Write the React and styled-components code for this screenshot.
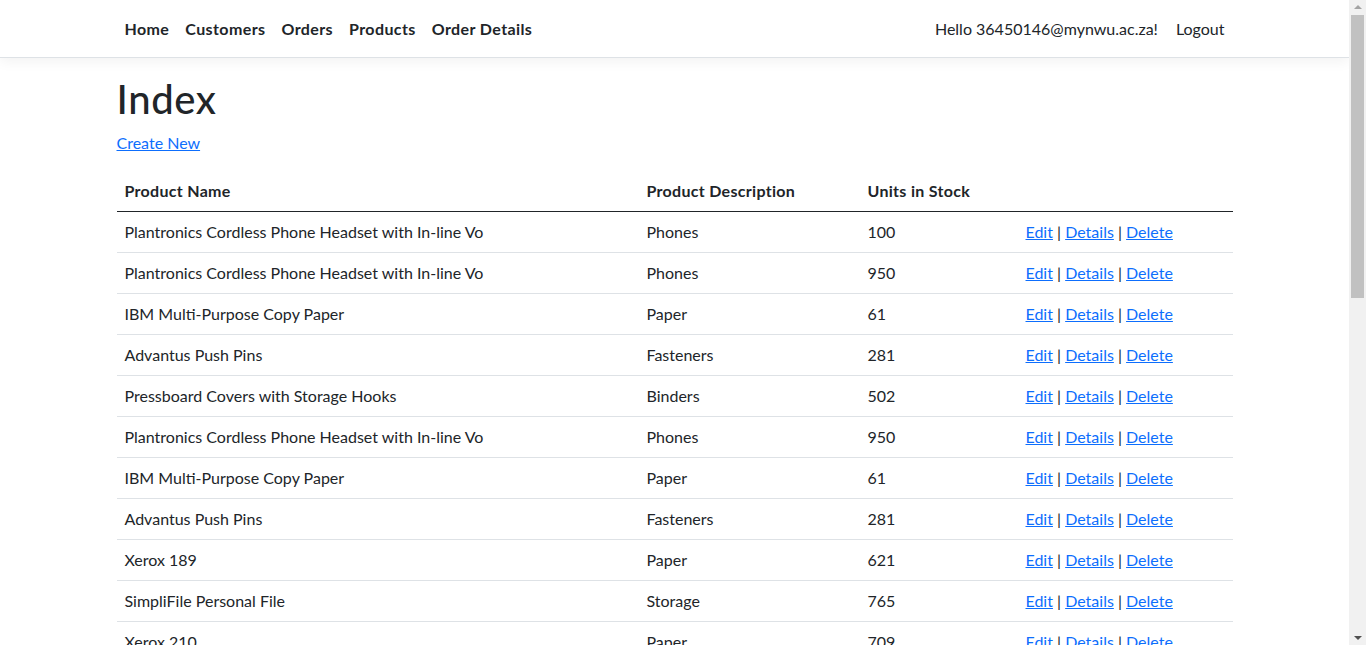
import React from "react";
import styled, { createGlobalStyle } from "styled-components";

const products = [
  ["Plantronics Cordless Phone Headset with In-line Vo", "Phones", 100],
  ["Plantronics Cordless Phone Headset with In-line Vo", "Phones", 950],
  ["IBM Multi-Purpose Copy Paper", "Paper", 61],
  ["Advantus Push Pins", "Fasteners", 281],
  ["Pressboard Covers with Storage Hooks", "Binders", 502],
  ["Plantronics Cordless Phone Headset with In-line Vo", "Phones", 950],
  ["IBM Multi-Purpose Copy Paper", "Paper", 61],
  ["Advantus Push Pins", "Fasteners", 281],
  ["Xerox 189", "Paper", 621],
  ["SimpliFile Personal File", "Storage", 765],
  ["Xerox 210", "Paper", 709],
  ["Avery 508", "Labels", 344],
  ["Staples", "Fasteners", 418],
  ["Eldon Base for stackable storage shelf", "Storage", 122],
  ["Global Deluxe Stacking Chair", "Chairs", 57],
  ["Xerox 1967", "Paper", 283],
  ["Fellowes PB200 Plastic Comb Binding Machine", "Binders", 36],
  ["Newell 341", "Art", 490],
  ["Wilson Jones Active Use Binders", "Binders", 215],
  ["Avery 498", "Labels", 377],
  ["Ibico Hi-Tech Manual Binding System", "Binders", 48],
  ["Xerox 1908", "Paper", 612],
  ["Akro Stacking Bins", "Storage", 163],
  ["Newell 318", "Art", 540],
  ["Acme Value Line Scissors", "Supplies", 92],
];

export default function App() {
  return (
    <Page>
      <GlobalStyle />
      <Header>
        <NavContainer>
          <NavList>
            <NavLink href="#">Home</NavLink>
            <NavLink href="#">Customers</NavLink>
            <NavLink href="#">Orders</NavLink>
            <NavLink href="#">Products</NavLink>
            <NavLink href="#">Order Details</NavLink>
          </NavList>
          <UserArea>
            <Greeting>Hello 36450146@mynwu.ac.za!</Greeting>
            <LogoutButton type="button">Logout</LogoutButton>
          </UserArea>
        </NavContainer>
      </Header>

      <Main>
        <Title>Index</Title>
        <Para>
          <Link href="#">Create New</Link>
        </Para>
        <Table>
          <colgroup>
            <col style={{ width: 522 }} />
            <col style={{ width: 221 }} />
            <col style={{ width: 158 }} />
            <col />
          </colgroup>
          <thead>
            <tr>
              <Th>Product Name</Th>
              <Th>Product Description</Th>
              <Th>Units in Stock</Th>
              <Th></Th>
            </tr>
          </thead>
          <tbody>
            {products.map(([name, desc, stock], i) => (
              <tr key={i}>
                <Td>{name}</Td>
                <Td>{desc}</Td>
                <Td>{stock}</Td>
                <Td>
                  <Link href="#">Edit</Link> | <Link href="#">Details</Link> |{" "}
                  <Link href="#">Delete</Link>
                </Td>
              </tr>
            ))}
          </tbody>
        </Table>
      </Main>

      <Footer>
        <FooterInner>&copy; 2023 - Products - <Link href="#">Privacy</Link></FooterInner>
      </Footer>

      {/* browser scrollbar as in the screenshot */}
      <ScrollRail>
        <ArrowUp />
        <Thumb />
        <ArrowDown />
      </ScrollRail>
    </Page>
  );
}

const GlobalStyle = createGlobalStyle`
  *, *::before, *::after { box-sizing: border-box; }
  html, body { margin: 0; }
  body {
    font-family: "Segoe UI", Lato, "Noto Sans", "Liberation Sans", sans-serif;
    font-size: 16px;
    line-height: 1.5;
    color: #212529;
    background: #fff;
  }
`;

const Page = styled.div`
  margin-right: 17px;
`;

const Header = styled.header`
  background: #fff;
  border-bottom: 1px solid #dee2e6;
  box-shadow: 0 0.25rem 0.75rem rgba(0, 0, 0, 0.05);
  margin-bottom: 17px;
`;

const NavContainer = styled.nav`
  max-width: 1140px;
  margin: 0 auto;
  padding: 9px 12px 8px;
  display: flex;
  align-items: center;
  justify-content: space-between;
`;

const NavList = styled.div`
  display: flex;
  align-items: center;
`;

const NavLink = styled.a`
  display: block;
  padding: 8px;
  color: #212529;
  font-weight: 700;
  text-decoration: none;
  letter-spacing: 0.4px;
`;

const UserArea = styled.div`
  display: flex;
  align-items: center;
`;

const Greeting = styled.span`
  padding: 8px 10px 8px 8px;
  color: #212529;
`;

const LogoutButton = styled.button`
  background: none;
  border: none;
  padding: 8px;
  font: inherit;
  color: #212529;
  cursor: pointer;
`;

const Main = styled.main`
  max-width: 1140px;
  margin: 0 auto;
  padding: 0 12px 16px;
`;

const Title = styled.h1`
  font-size: 40px;
  font-weight: 500;
  line-height: 1.2;
  margin: 0 0 8px;
  letter-spacing: 0.6px;
`;

const Para = styled.p`
  margin: 0 0 16px;
`;

const Link = styled.a`
  color: #0d6efd;
  text-decoration: underline;
`;

const Table = styled.table`
  width: 100%;
  border-collapse: collapse;
  table-layout: fixed;
  margin-bottom: 16px;
`;

const Th = styled.th`
  text-align: left;
  font-weight: 700;
  padding: 8px;
  border-bottom: 1px solid #212529;
  letter-spacing: 0.3px;
`;

const Td = styled.td`
  padding: 8px;
  border-bottom: 1px solid #dee2e6;
  white-space: nowrap;
`;

const Footer = styled.footer`
  border-top: 1px solid #dee2e6;
  color: #6c757d;
  line-height: 60px;
`;

const FooterInner = styled.div`
  max-width: 1140px;
  margin: 0 auto;
  padding: 0 12px;
`;

const ScrollRail = styled.div`
  position: fixed;
  top: 0;
  right: 0;
  bottom: 0;
  width: 17px;
  background: #f1f1f1;
  display: flex;
  flex-direction: column;
  align-items: center;
`;

const ArrowUp = styled.div`
  margin-top: 5px;
  width: 0;
  height: 0;
  border-left: 4px solid transparent;
  border-right: 4px solid transparent;
  border-bottom: 4px solid #a3a3a3;
`;

const Thumb = styled.div`
  margin-top: 6px;
  width: 13px;
  height: 283px;
  background: #c1c1c1;
`;

const ArrowDown = styled.div`
  margin-top: auto;
  margin-bottom: 5px;
  width: 0;
  height: 0;
  border-left: 4px solid transparent;
  border-right: 4px solid transparent;
  border-top: 4px solid #505050;
`;
